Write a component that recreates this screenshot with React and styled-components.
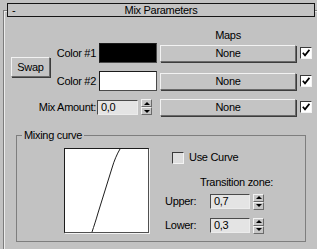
import React from 'react';
import styled, { createGlobalStyle } from 'styled-components';

const Global = createGlobalStyle`
  html, body { margin: 0; padding: 0; background: #c2c2c2; }
  body {
    font-family: "Liberation Sans", Arial, sans-serif;
    font-size: 11px;
    letter-spacing: -0.3px;
    color: #000;
  }
  button { font: inherit; letter-spacing: inherit; color: inherit; }
`;

const Page = styled.div`
  width: 317px;
  height: 249px;
  overflow: hidden;
  background: #c2c2c2;
  padding-top: 10px;
  box-sizing: border-box;
`;

const Rollout = styled.div`
  margin-left: 3px;
  height: 239px;
  box-sizing: border-box;
  border-left: 1px solid #7c7c7c;
  border-top: 1px solid #7c7c7c;
  box-shadow: inset 1px 1px 0 #ececec;
`;

const Header = styled.div`
  margin: -8px 0 0 3px;
  width: 308px;
  height: 14px;
  box-sizing: border-box;
  border: 1px solid #151515;
  background: #c4c4c4;
  display: grid;
  grid-template-columns: 1fr auto 1fr;
  align-items: center;
  line-height: 12px;
`;

const Dash = styled.span`
  padding-left: 4px;
  justify-self: start;
`;

const MapsLabel = styled.div`
  margin: 12px 0 0 156px;
  width: 136px;
  height: 13px;
  line-height: 13px;
  text-align: center;
`;

const TopGrid = styled.div`
  display: grid;
  grid-template-columns: 46px 43px 58px 136px 13px;
  grid-template-rows: 22px 22px 18px;
  column-gap: 3px;
  row-gap: 6px;
  align-items: center;
`;

const RaisedButton = styled.button`
  box-sizing: border-box;
  margin: 0;
  padding: 0;
  background: #c4c4c4;
  border: 1px solid;
  border-color: #f2f2f2 #6a6a6a #6a6a6a #f2f2f2;
  box-shadow: 1px 1px 0 #3c3c3c;
  text-align: center;
  line-height: 13px;
`;

const SwapButton = styled(RaisedButton)`
  grid-column: 1;
  grid-row: 1 / span 2;
  margin-left: 7px;
  width: 39px;
  height: 20px;
`;

const MapButton = styled(RaisedButton)`
  grid-column: 4;
  width: 136px;
  height: 17px;
`;

const Label = styled.span`
  grid-column: ${p => p.$span ? '1 / span 2' : '2'};
  justify-self: end;
  white-space: nowrap;
  line-height: 13px;
`;

const Swatch = styled.div`
  grid-column: 3;
  height: 20px;
  box-sizing: border-box;
  background: ${p => p.$color};
  border: 1px solid;
  border-color: #1a1a1a #4a4a4a #4a4a4a #1a1a1a;
`;

const Check = styled.div`
  grid-column: ${p => p.$col || 'auto'};
  justify-self: end;
  width: 12px;
  height: 12px;
  box-sizing: border-box;
  border: 1px solid;
  border-color: #3a3a3a #f4f4f4 #f4f4f4 #3a3a3a;
  background: ${p => p.$checked ? '#ffffff' : '#dedede'};
  display: flex;
  align-items: center;
  justify-content: center;
  flex-shrink: 0;
`;

const SpinWrap = styled.div`
  grid-column: ${p => p.$col || 'auto'};
  display: flex;
  align-items: center;
  gap: 3px;
  margin-left: ${p => p.$shift || 0}px;
`;

const SpinInput = styled.div`
  width: ${p => p.$w}px;
  height: 15px;
  box-sizing: border-box;
  border: 1px solid;
  border-color: #4a4a4a #ececec #ececec #4a4a4a;
  background: #e4e4e4;
  padding-left: 3px;
  line-height: 13px;
`;

const SpinArrows = styled.div`
  display: flex;
  flex-direction: column;
`;

const SpinBtn = styled.div`
  width: 11px;
  height: 8px;
  box-sizing: border-box;
  background: #c6c6c6;
  border: 1px solid;
  border-color: #f2f2f2 #6a6a6a #6a6a6a #f2f2f2;
  display: flex;
  align-items: center;
  justify-content: center;
`;

const Tri = styled.span`
  width: 0;
  height: 0;
  border-left: 3px solid transparent;
  border-right: 3px solid transparent;
  ${p => p.$down ? 'border-top: 3px solid #000;' : 'border-bottom: 3px solid #000;'}
`;

const Group = styled.fieldset`
  margin: 13px 0 0 12px;
  padding: 0;
  width: 290px;
  height: 113px;
  box-sizing: border-box;
  border: 1px solid #7e7e7e;
  min-width: 0;
`;

const Legend = styled.legend`
  margin-left: 5px;
  padding: 0 2px;
  line-height: 13px;
  height: 13px;
`;

const GroupBody = styled.div`
  display: flex;
  align-items: flex-start;
`;

const CurveBox = styled.div`
  margin: 6px 0 0 47px;
  width: 85px;
  height: 85px;
  box-sizing: border-box;
  flex-shrink: 0;
  background: #fff;
  border: 1px solid;
  border-color: #1c1c1c #505050 #505050 #1c1c1c;
  box-shadow: 1px 1px 0 #f4f4f4;
  svg { display: block; }
`;

const RightCol = styled.div`
  margin-left: 16px;
  display: flex;
  flex-direction: column;
`;

const UseCurveRow = styled.div`
  margin: 9px 0 0 7px;
  height: 13px;
  display: flex;
  align-items: center;
  gap: 5px;
  line-height: 13px;
`;

const ZoneLabel = styled.div`
  margin: 12px 0 0 35px;
  line-height: 13px;
  height: 13px;
`;

const FieldRow = styled.div`
  margin-top: ${p => p.$top}px;
  height: 17px;
  display: grid;
  grid-template-columns: 45px auto;
  align-items: center;
  line-height: 13px;
`;

const CheckMark = () => (
  <svg width="8" height="8" viewBox="0 0 8 8">
    <path d="M0.8 3.8 L3 6.4 L7.4 0.8" fill="none" stroke="#000" strokeWidth="1.7" />
  </svg>
);

const Spinner = ({ value, w, col, shift }) => (
  <SpinWrap $col={col} $shift={shift}>
    <SpinInput $w={w}>{value}</SpinInput>
    <SpinArrows>
      <SpinBtn><Tri /></SpinBtn>
      <SpinBtn><Tri $down /></SpinBtn>
    </SpinArrows>
  </SpinWrap>
);

export default function App() {
  return (
    <>
      <Global />
      <Page>
        <Rollout>
          <Header>
            <Dash>-</Dash>
            <span>Mix Parameters</span>
            <span />
          </Header>
          <MapsLabel>Maps</MapsLabel>
          <TopGrid>
            <SwapButton>Swap</SwapButton>
            <Label>Color #1</Label>
            <Swatch $color="#000000" />
            <MapButton>None</MapButton>
            <Check $col={5} $checked><CheckMark /></Check>

            <Label>Color #2</Label>
            <Swatch $color="#ffffff" />
            <MapButton>None</MapButton>
            <Check $col={5} $checked><CheckMark /></Check>

            <Label $span>Mix Amount:</Label>
            <Spinner value="0,0" w={41} col={3} shift={-2} />
            <MapButton>None</MapButton>
            <Check $col={5} $checked><CheckMark /></Check>
          </TopGrid>
          <Group>
            <Legend>Mixing curve</Legend>
            <GroupBody>
              <CurveBox>
                <svg width="83" height="83" viewBox="0 0 83 83">
                  <path
                    d="M27 83 C29 77 31 71 33 64 L47 19 C49 12 52 5 55 0"
                    fill="none"
                    stroke="#1e1e1e"
                    strokeWidth="1"
                  />
                </svg>
              </CurveBox>
              <RightCol>
                <UseCurveRow>
                  <Check />
                  <span>Use Curve</span>
                </UseCurveRow>
                <ZoneLabel>Transition zone:</ZoneLabel>
                <FieldRow $top={4}>
                  <span>Upper:</span>
                  <Spinner value="0,7" w={40} />
                </FieldRow>
                <FieldRow $top={7}>
                  <span>Lower:</span>
                  <Spinner value="0,3" w={40} />
                </FieldRow>
              </RightCol>
            </GroupBody>
          </Group>
        </Rollout>
      </Page>
    </>
  );
}
